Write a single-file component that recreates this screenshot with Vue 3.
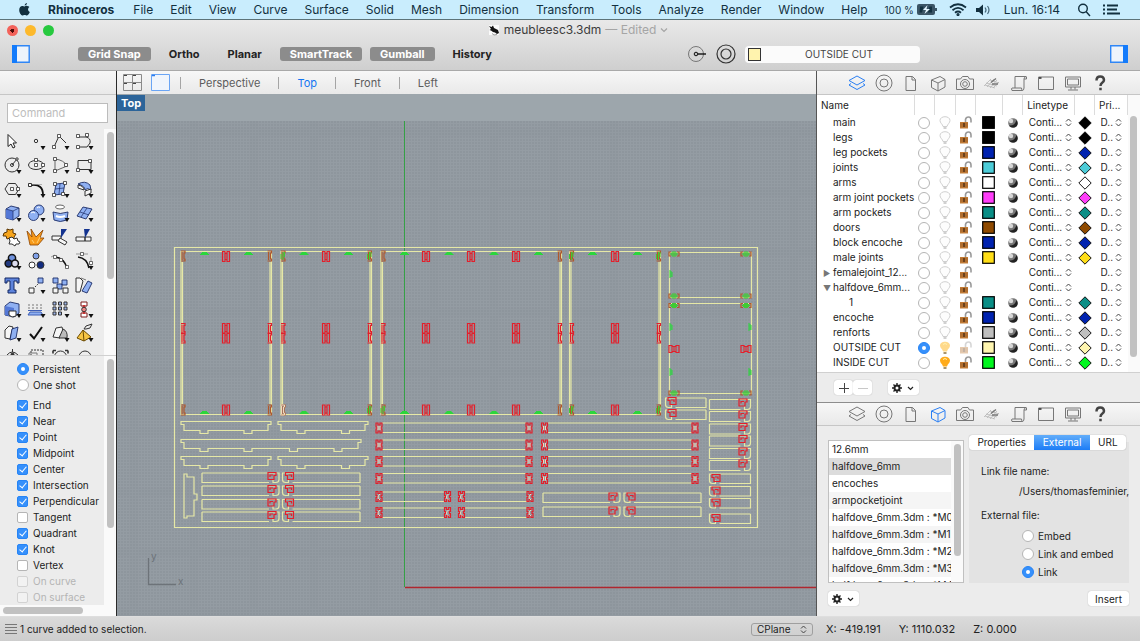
<template>
  <div class="app">
    <nav class="menubar">
      <svg class="menubar__apple" viewBox="0 0 14 16" width="13" height="15">
        <path
          fill="#12303f"
          d="M9.600 1c.1 1.300-1 2.700-2.400 2.800C7 2.500 8.300 1.100 9.600 1zM7 4.800c.6 0 1.500-.8 2.800-.7 1 .1 1.900.5 2.500 1.300-2.200 1.400-1.800 4.400.4 5.300-.6 1.700-1.800 3.700-3 3.700-1 0-1.300-.6-2.500-.6s-1.600.6-2.500.6C3.200 14.400 1.300 11.400 1.300 8.600c0-2.800 1.700-4.300 3.300-4.400 1.100 0 1.900.6 2.400.6z"
        />
      </svg>
      <a v-for="(item, i) in menu" :key="item" href="#" :class="{ strong: i === 0 }">{{ item }}</a>
      <div class="menubar__extras">
        <div class="battery">
          <span>100 %</span>
          <svg viewBox="0 0 20 11" width="20" height="11">
            <rect x="0" y="0" width="18" height="11" rx="2" fill="#3b5566" />
            <rect x="18" y="4" width="2" height="3" fill="#3b5566" />
            <path d="M3 2.500h3.500L5 8.500H2.500zM15 2.500h-2.500L11 8.500h4z" fill="#12303f" />
            <path d="M10.500 1L6 6h3l-1.500 4L13 5H9.500z" fill="#e4f6ff" />
          </svg>
        </div>
        <div class="signal">
          <svg viewBox="0 0 18 13" width="18" height="13" fill="none" stroke="#12303f" stroke-width="1.8">
            <path d="M1 4.500Q9-2 17 4.500M3.500 7.200Q9 2.500 14.500 7.200M6 9.700q3-2.400 6 0" />
            <circle cx="9" cy="11.500" r=".7" />
          </svg>
          <svg viewBox="0 0 17 12" width="17" height="12">
            <path d="M1 4h3l4-3.500v11L4 8H1z" fill="#12303f" />
            <path d="M10 3.500q2 2.500 0 5M12.500 2q3 4 0 8" fill="none" stroke="#46687a" stroke-width="1.2" />
          </svg>
        </div>
        <span class="clock">Lun. 16:14</span>
        <svg viewBox="0 0 14 14" width="14" height="14" fill="none" stroke="#12303f" stroke-width="1.4">
          <circle cx="6" cy="5.500" r="4.300" />
          <path d="M9 8.500l4 4.500" />
        </svg>
        <svg viewBox="0 0 17 11" width="17" height="11" stroke="#12303f" stroke-width="1.8">
          <path d="M0 1.500h2M4 1.500h11M0 5.500h2M4 5.500h10M0 9.500h2M4 9.500h13" />
        </svg>
      </div>
    </nav>

    <header class="titlebar">
      <div class="titlebar__row">
        <div class="lights">
          <button class="light light--close" aria-label="Close" />
          <button class="light light--min" aria-label="Minimise" />
          <button class="light light--zoom" aria-label="Zoom" />
        </div>
        <div class="title">
          <svg viewBox="0 0 12 12" width="12" height="12">
            <path d="M1 1h10v10H1z" fill="#fafafa" />
            <path d="M1 2l2.500 1L5 1.500 6 4l4 2 1 3-2 1-2-1.500L5 8 3 6.500 1.500 6 3 5z" fill="#111" />
            <path d="M4 9.500l2 1.500 3-.5" fill="none" stroke="#999" />
          </svg>
          <span>meubleesc3.3dm</span>
          <span class="title__state">— Edited</span>
          <svg viewBox="0 0 8 6" width="8" height="6" fill="none" stroke="#a5a5a5" stroke-width="1.2">
            <path d="M1 1.500l3 3 3-3" />
          </svg>
        </div>
      </div>

      <div class="toolbar">
        <button class="pane-toggle" aria-label="Toggle left sidebar">
          <svg viewBox="0 0 18 18" width="18" height="18">
            <path d="M.7.7h16.500v16.500H.7z" fill="#eef4fb" stroke="#2f86f6" stroke-width="1.4" />
            <path d="M0 0h5v18H0z" fill="#147bfb" />
          </svg>
        </button>
        <div class="toggles">
          <button v-for="t in toggles" :key="t.label" class="toggle" :class="{ 'toggle--on': t.on }">
            {{ t.label }}
          </button>
        </div>
        <div class="toolbar__layer">
          <svg viewBox="0 0 19 18" width="19" height="18" fill="none" stroke="#777">
            <circle cx="8" cy="9" r="7.500" />
            <circle cx="8" cy="9" r="1.800" stroke="#111" fill="#bbb" />
            <path d="M10 9h8" stroke="#111" stroke-width="1.4" />
          </svg>
          <svg viewBox="0 0 20 20" width="20" height="20" fill="none" stroke="#333" stroke-width="1.2">
            <circle cx="10" cy="10" r="9" />
            <circle cx="10" cy="10" r="5" />
          </svg>
          <button class="layer-button"><i />OUTSIDE CUT</button>
        </div>
        <button class="pane-toggle pane-toggle--right" aria-label="Toggle right sidebar">
          <svg viewBox="0 0 18 18" width="18" height="18">
            <path d="M.7.7h16.500v16.500H.7z" fill="#eef4fb" stroke="#2f86f6" stroke-width="1.4" />
            <path d="M13 0h5v18h-5z" fill="#147bfb" />
          </svg>
        </button>
      </div>
    </header>

    <main class="workspace">
      <aside class="left">
        <div class="strip" />
        <div class="command">
          <input type="text" placeholder="Command" aria-label="Command">
        </div>
        <div class="scroller scroller--tools">
          <div class="tools">
            <button v-for="(tool, i) in tools" :key="i" class="tool" :aria-label="`Tool ${i + 1}`">
              <svg viewBox="0 0 24 24" width="24" height="24" fill="none" stroke="#333" v-html="tool" />
            </button>
          </div>
          <div class="track"><div class="thumb thumb--tools" /></div>
        </div>
        <div class="scroller scroller--snaps">
          <div class="snaps">
            <div class="snaps__modes">
              <label v-for="m in ['Persistent', 'One shot']" :key="m" class="snap">
                <input v-model="snapMode" type="radio" name="mode" :value="m">{{ m }}
              </label>
            </div>
            <label v-for="s in snaps" :key="s.label" class="snap" :class="{ 'snap--off': s.disabled }">
              <input v-model="s.on" type="checkbox" :disabled="s.disabled">{{ s.label }}
            </label>
          </div>
          <div class="track"><div class="thumb thumb--snaps" /></div>
        </div>
        <div class="hscroll"><div /></div>
      </aside>

      <section class="viewport">
        <div class="tabs">
          <svg viewBox="0 0 19 17" width="19" height="17" fill="none" stroke="#8a8a8a">
            <path d="M.5.5h18v16H.5zM9.500.5v16M.5 8.500h18" />
            <path d="M1 1.500h3M10 1.500h3M1 9.500h3M10 9.500h3" stroke="#444" />
          </svg>
          <svg class="tabs__single" viewBox="0 0 19 17" width="19" height="17" fill="none" stroke="#6aa5f5">
            <path d="M.5.5h18v16H.5z" fill="#f0f5fc" />
            <path d="M1 1.500h3" stroke="#2b7df0" stroke-width="1.5" />
          </svg>
          <button v-for="v in views" :key="v" class="tab" :class="{ 'tab--on': v === view }" @click="view = v">
            {{ v }}
          </button>
        </div>
        <div class="canvas">
          <span class="canvas__label">Top</span>
          <svg class="canvas__svg" viewBox="117 94 699 522" preserveAspectRatio="xMinYMin slice" fill="none">
            <defs>
              <pattern id="fine" width="3" height="3" patternUnits="userSpaceOnUse">
                <path d="M0 .5h3M.5 0v3" stroke="#9ea6ad" stroke-width="1" />
              </pattern>
              <pattern id="coarse" width="60" height="60" patternUnits="userSpaceOnUse">
                <path d="M0 12h60M14 0v60" stroke="#868d94" stroke-width="9" opacity=".14" />
              </pattern>
            </defs>
            <rect x="117" y="94" width="699" height="27" fill="#9da6ac" />
            <rect x="117" y="121" width="699" height="495" fill="#8e969d" />
            <rect x="117" y="121" width="699" height="495" fill="url(#fine)" opacity=".4" />
            <rect x="117" y="121" width="699" height="495" fill="url(#coarse)" />
            <path d="M404.500 121v466" stroke="#35a045" />
            <path d="M405 587.500H816" stroke="#b0262e" stroke-width="1.4" />
            <path d="M148.500 558v26.500H176" stroke="#6d7379" stroke-width="1.3" />
            <text x="151" y="560" class="axis">y</text>
            <text x="178" y="585" class="axis">x</text>
            <path :d="outlines" stroke="#e6e8a6" stroke-width="1.2" />
            <path :d="greens" stroke="#2bd63c" />
            <path :d="corners" stroke="#b0582c" stroke-width="1.2" />
            <path :d="cornerFills" stroke="#3fcb33" />
            <path :d="reds" stroke="#e31f2b" stroke-width="1.2" />
            <path :d="cores" stroke="#f2d9bd" />
          </svg>
        </div>
      </section>

      <aside class="right">
        <div class="strip inspector">
          <button v-for="(icon, i) in inspectors" :key="i" :class="{ on: i === 0 }" :aria-label="icon.name">
            <svg viewBox="0 0 20 18" width="20" height="18" v-html="icon.art" />
          </button>
        </div>

        <div class="layers">
          <table>
            <colgroup>
              <col class="c-name">
              <col class="c-dot">
              <col class="c-bulb">
              <col class="c-dot">
              <col class="c-color">
              <col class="c-dot">
              <col class="c-line">
              <col class="c-dot">
              <col class="c-print">
            </colgroup>
            <thead>
              <tr>
                <th>Name</th><th /><th /><th /><th /><th /><th>Linetype</th><th /><th>Pri...</th>
              </tr>
            </thead>
            <tbody>
              <tr v-for="l in layers" :key="l.name">
                <td class="name" :class="{ 'name--child': l.child }">
                  <span class="name__arrow">{{ l.arrow }}</span>{{ l.name }}
                </td>
                <td>
                  <input v-model="current" type="radio" name="layer" :value="l.name" :aria-label="l.name">
                </td>
                <td>
                  <svg viewBox="0 0 12 14" width="12" height="14">
                    <path
                      d="M1 4.500C1 2 3.500.7 6 .7S11 2 11 4.500C11 7 8.500 8 8 10.500H4C3.500 8 1 7 1 4.500z"
                      :fill="l.bulb || '#fdfdfd'"
                      :stroke="l.bulb ? 'none' : '#c4c4c4'"
                      stroke-width=".8"
                    />
                    <path d="M4.500 11h3v2h-3z" :fill="l.bulb ? '#a8946a' : '#d0d0d0'" />
                    <path v-if="l.bulb" d="M4 3.500q2-2 4 0" fill="none" stroke="#fff3b0" />
                  </svg>
                </td>
                <td>
                  <svg viewBox="0 0 13 13" width="13" height="13" :opacity="l.name === 'OUTSIDE CUT' ? 0.4 : 1">
                    <path d="M6.500 6V3.500Q7 1 9.500 1T12 4v2.500" fill="none" stroke="#9a9a9a" stroke-width="1.6" />
                    <path d="M1 6h8v6.500H1z" fill="#c07a35" />
                    <path d="M1 8h8M1 10h8" stroke="#8f5520" stroke-width=".6" />
                    <path d="M5 7v4" stroke="#3c2410" stroke-width="1.2" />
                  </svg>
                </td>
                <td>
                  <svg v-if="l.color" viewBox="0 0 13 13" width="13" height="13">
                    <rect x=".7" y=".7" width="11.600" height="11.600" :fill="l.color" stroke="#000" stroke-width="1.2" />
                  </svg>
                </td>
                <td>
                  <svg v-if="l.color" viewBox="0 0 12 12" width="12" height="12">
                    <circle cx="6" cy="6" r="4.800" fill="#777" />
                    <path d="M2 8.500Q8 9 9.500 3q3 5-1.500 7.200Q4 11.500 2 8.500z" fill="#222" />
                    <circle cx="4" cy="4" r="2.200" fill="#d8d8d8" />
                  </svg>
                </td>
                <td>
                  <div class="popup popup--line">
                    <select :aria-label="`${l.name} linetype`"><option>Conti...</option></select>
                    <svg viewBox="0 0 7 9" width="7" height="9"><path d="M1 3.500l2.500-2.500L6 3.500M1 5.500L3.500 8 6 5.500" /></svg>
                  </div>
                </td>
                <td>
                  <svg v-if="l.color" viewBox="0 0 14 14" width="14" height="14">
                    <path d="M7 .8L13.200 7 7 13.200.8 7z" :fill="l.color" stroke="#111" />
                  </svg>
                </td>
                <td>
                  <div class="popup popup--print">
                    <select :aria-label="`${l.name} print width`"><option>D..</option></select>
                    <svg viewBox="0 0 7 9" width="7" height="9"><path d="M1 3.500l2.500-2.500L6 3.500M1 5.500L3.500 8 6 5.500" /></svg>
                  </div>
                </td>
              </tr>
            </tbody>
          </table>
          <div class="track"><div class="thumb thumb--layers" /></div>
        </div>

        <div class="layer-actions">
          <div class="pair">
            <button aria-label="Add layer">
              <svg viewBox="0 0 10 10" width="10" height="10" stroke="#444"><path d="M0 5.500h10M5.500 0v10" /></svg>
            </button>
            <button aria-label="Remove layer">
              <svg viewBox="0 0 10 10" width="10" height="10" stroke="#c8c8c8"><path d="M0 5.500h10" /></svg>
            </button>
          </div>
          <button class="gear" aria-label="Layer actions"><svg viewBox="0 0 24 10" width="24" height="10" v-html="gear" /></button>
        </div>

        <div class="strip inspector inspector--lower">
          <button v-for="(icon, i) in inspectors" :key="i" :class="{ on: i === 3 }" :aria-label="icon.name">
            <svg viewBox="0 0 20 18" width="20" height="18" v-html="icon.art" />
          </button>
        </div>

        <div class="blocks">
          <div class="blocks__main">
            <div class="list">
              <ul>
                <li v-for="b in blocks" :key="b" :class="{ selected: b === 'halfdove_6mm' }">{{ b }}</li>
              </ul>
              <div class="track"><div class="thumb thumb--list" /></div>
            </div>
            <div class="details">
              <div class="segments">
                <button v-for="s in ['Properties', 'External', 'URL']" :key="s" :class="{ on: s === 'External' }">
                  {{ s }}
                </button>
              </div>
              <div class="details__box">
                <p>Link file name:</p>
                <p class="path">/Users/thomasfeminier,</p>
                <p>External file:</p>
                <label v-for="e in ['Embed', 'Link and embed', 'Link']" :key="e">
                  <input v-model="external" type="radio" name="external" :value="e">{{ e }}
                </label>
              </div>
            </div>
          </div>
          <div class="blocks__actions">
            <button class="gear" aria-label="Block actions"><svg viewBox="0 0 24 10" width="24" height="10" v-html="gear" /></button>
            <button class="insert">Insert</button>
          </div>
        </div>
      </aside>
    </main>

    <footer class="status">
      <svg viewBox="0 0 12 10" width="12" height="10" stroke="#777"><path d="M0 .5h12M0 3.500h12M0 6.500h12M0 9.500h12" /></svg>
      <span class="status__text">1 curve added to selection.</span>
      <div class="cplane">
        <select aria-label="Coordinate system"><option>CPlane</option></select>
        <svg viewBox="0 0 7 9" width="7" height="9"><path d="M1 3.500l2.500-2.500L6 3.500M1 5.500L3.500 8 6 5.500" /></svg>
      </div>
      <div class="coords">
        <span>X: -419.191</span>
        <span>Y: 1110.032</span>
        <span>Z: 0.000</span>
      </div>
    </footer>
  </div>
</template>

<script setup>
import { ref, reactive } from 'vue';

const menu = [
  'Rhinoceros', 'File', 'Edit', 'View', 'Curve', 'Surface', 'Solid', 'Mesh', 'Dimension',
  'Transform', 'Tools', 'Analyze', 'Render', 'Window', 'Help',
];

const toggles = [
  { label: 'Grid Snap', on: true },
  { label: 'Ortho' },
  { label: 'Planar' },
  { label: 'SmartTrack', on: true },
  { label: 'Gumball', on: true },
  { label: 'History' },
];

const views = ['Perspective', 'Top', 'Front', 'Left'];
const view = ref('Top');

const snapMode = ref('Persistent');
const snaps = reactive([
  { label: 'End', on: true },
  { label: 'Near', on: true },
  { label: 'Point', on: true },
  { label: 'Midpoint', on: true },
  { label: 'Center', on: true },
  { label: 'Intersection', on: true },
  { label: 'Perpendicular', on: true },
  { label: 'Tangent', on: false },
  { label: 'Quadrant', on: true },
  { label: 'Knot', on: true },
  { label: 'Vertex', on: false },
  { label: 'On curve', on: false, disabled: true },
  { label: 'On surface', on: false, disabled: true },
]);

const current = ref('OUTSIDE CUT');
const layers = [
  { name: 'main', color: '#000000' },
  { name: 'legs', color: '#000000' },
  { name: 'leg pockets', color: '#0022b0' },
  { name: 'joints', color: '#4cccd8' },
  { name: 'arms', color: '#ffffff' },
  { name: 'arm joint pockets', color: '#ff3dfa' },
  { name: 'arm pockets', color: '#0a8e86' },
  { name: 'doors', color: '#8f4a00' },
  { name: 'block encoche', color: '#0022b0' },
  { name: 'male joints', color: '#ffde17' },
  { name: 'femalejoint_12...', arrow: '▶' },
  { name: 'halfdove_6mm...', arrow: '▼' },
  { name: '1', color: '#0a8e86', child: true },
  { name: 'encoche', color: '#0022b0' },
  { name: 'renforts', color: '#bfbfbf' },
  { name: 'OUTSIDE CUT', color: '#fff6b0', bulb: '#ffd98a' },
  { name: 'INSIDE CUT', color: '#00f71e', bulb: '#ffab1a' },
];

const blocks = [
  '12.6mm', 'halfdove_6mm', 'encoches', 'armpocketjoint',
  'halfdove_6mm.3dm : *M0', 'halfdove_6mm.3dm : *M1', 'halfdove_6mm.3dm : *M2',
  'halfdove_6mm.3dm : *M3', 'halfdove_6mm.3dm : *M4',
];
const external = ref('Link');

const gear =
  '<g stroke="#222"><circle cx="5" cy="5" r="2.500" fill="none" stroke-width="2"/>' +
  '<path d="M5 0v2M5 8v2M0 5h2M8 5h2M1.500 1.500l1.400 1.400M7 7l1.500 1.500M8.500 1.500L7 3M3 7L1.500 8.500" stroke-width="1.4"/>' +
  '<path d="M16 4l2.500 2.500L21 4" fill="none" stroke-width="1.2"/></g>';

const inspectors = [
  { name: 'Layers', art: '<path d="M10 2l8 4.500-8 4.500-8-4.500zM4 9.500L2 11l8 4.500 8-4.500-2-1.500"/>' },
  { name: 'Object', art: '<circle cx="10" cy="9" r="8"/><circle cx="10" cy="9" r="4"/>' },
  { name: 'Notes', art: '<path d="M5 2.500h6.500l3 3v11H5zM11 2.500v3.500h3.500"/>' },
  { name: 'Blocks', art: '<path d="M3.500 6L12 2.500l5 3V13l-7 4-6.500-3.500zM3.500 6l6.500 3 7-3.500M10 9v8"/>' },
  { name: 'Views', art: '<path d="M1.500 5h4l2-2.500h5.500L14.500 5h4v10.500h-17z"/><circle cx="10" cy="10" r="4.500"/><circle cx="10" cy="10" r="2.300"/>' },
  { name: 'Planes', art: '<path d="M2 12l7-7M5 13l7-8M8 14l7-8M11 14l6-6M4 9l11 3M3 11l10 3M8 6l9 3" stroke="#b5b5b5" stroke-width=".8"/><path d="M9 8.500l5-4M10 10h6" stroke="#777" stroke-width="1.4"/>' },
  { name: 'History', art: '<path d="M6 14V2.500h11q-2 .5-2 2.500v9q0 2.500-2 2.500H3q-1-2 0-2.500h9.500q0 2 1 2.500M15 5h2.500V2.500"/>' },
  { name: 'Frame', art: '<path d="M2.500 3h15v12.500h-15z"/><path d="M3 4h2.500" stroke="#333" stroke-width="1.6"/>' },
  { name: 'Display', art: '<path d="M2.500 3h15v10h-15zM4.500 5h11v6h-11zM8 13v2.500M12 13v2.500M5 16h10"/>' },
  { name: 'Help', art: '<path d="M6.500 6.500q0-4 3.700-4T14 6q0 1.500-1.800 2.700-1.700 1.200-1.700 3.300M10.500 13.700v2.500" stroke="#444" stroke-width="2.5"/>' },
];

// tool palette
const node = (x, y) => `M${x - 1.5} ${y - 1.5}h3v3h-3z`;
const more = '<path d="M16.500 17h5l-2.500 4z" fill="#111" stroke="none"/>';
const b = 'fill="#8fb0f2" stroke="#1c2c66" stroke-width=".9"';
const w = 'fill="#f6f6f6" stroke="#333"';

const tools = [
  '<path d="M8 5.500v12l3-2.500 2 4 2-1-2-4h3.500z" fill="#fff" stroke="#222"/>',
  '<circle cx="12" cy="12" r="1.700"/>' + more,
  `<path d="M6 18L11 7l7 7"/><path d="${node(6, 18)}${node(11, 7)}" fill="#fff" stroke-width=".8"/>` + more,
  `<path d="M6 8h8q5 1 4 6l-3 4H6"/><path d="${node(6, 7)}${node(15, 6)}${node(6, 18)}" fill="#fff" stroke-width=".8"/>` + more,
  '<circle cx="12" cy="12" r="7"/><path d="M12 12l5-6"/><circle cx="12" cy="12" r="1.500"/><circle cx="17" cy="6" r="1.200" fill="#fff"/>' + more,
  `<ellipse cx="12" cy="12" rx="7.500" ry="4.500"/><path d="${node(12, 12)}${node(12, 7)}${node(19, 12)}" fill="#fff" stroke-width=".8"/>` + more,
  `<path d="M7 6q9 1 12 7L7 18z" stroke="#666"/><path d="${node(7, 6)}${node(7, 18)}${node(18, 12)}" fill="#fff" stroke-width=".8"/>` + more,
  `<path d="M6 7.500h13v9H6z"/><path d="${node(6, 17)}${node(18, 8)}" fill="#fff" stroke-width=".8"/>` + more,
  `<path d="M8.500 6.500h7l3.500 5.500-3.500 5.500h-7L5 12z"/><path d="${node(12, 12)}${node(18, 12)}" fill="#fff" stroke-width=".8"/>` + more,
  `<path d="M8 8q11-1 11 10" stroke-width="1.8" stroke="#111"/><path d="M6 7.500h12" stroke="#999" stroke-width=".7"/><path d="${node(6, 8)}" fill="#fff"/>` + more,
  `<path d="M8 7l9-1-2 11-9 1z" ${b}/><path d="M7 12l9-1M12 7l-1 10" stroke="#1c2c66" stroke-width=".7"/><path d="${node(7, 7)}${node(17, 6)}${node(6, 18)}${node(15, 17)}" fill="#fff" stroke-width=".8"/>` + more,
  `<path d="M6 7q7-4 12 1l1 5q-4-3-6 0 0-4-7-6z" ${b}/><path d="M6 8q6 1 6 5l-6-2zM13 14l6-2v4l-6 3z" ${w}/>` + more,
  `<path d="M6 8l5-3 8 2v8l-6 4-7-2z" ${b}/><path d="M6 8l7 2v9l-7-2z" fill="#5478d6" stroke="none"/><path d="M6 8l7 2 6-3M13 10v9" stroke="#1c2c66" stroke-width=".7"/>` + more,
  `<circle cx="15" cy="9" r="5" ${b}/><circle cx="9.500" cy="14.500" r="5" ${b}/><path d="M7 12q2-2 4 0M13 7q2-2 3-.5" stroke="#fff"/>` + more,
  `<ellipse cx="12" cy="6" rx="4.500" ry="2" fill="#fff" stroke="#666"/><path d="M5 11q7 3 15 0l-1 8q-7 3-13 0z" ${b}/><path d="M8 15q4 2 9 0" stroke="#fff" stroke-width="2"/>` + more,
  `<path d="M5 15l6-9 9 2-6 10z" ${b}/><path d="M8 11l9 3M15 7l-6 9" stroke="#1c2c66" stroke-width=".7"/>` + more,
  '<path d="M4 8l3-1 0-3 3 1 3-1 0 4 3 1-2 3 0 2-4-1-3 1-1-3-3 0z" fill="#f7a51c" stroke="#5b3500"/><path d="M9 13l3-1 2 2 3-1 1 3 2 1-1 2-3 0-1 2-3-2-3 0 1-3z" fill="#fff"/>',
  '<path d="M3 6l5 6-1-8 5 8 7-7-3 8 4 0-6 7H6z" fill="#f79a1b" stroke="#8a4300" stroke-width=".8"/><path d="M8 15l2 3M13 18l3-6" stroke="#ffd37a"/>',
  `<path d="M4 11h9v4H4z" ${w}/><path d="M12 13l7 4-2 3-7-4z" ${w}/><path d="M13 4h6l-6 9z" fill="#14338f" stroke="none"/>`,
  `<path d="M4 12h9v4H4zM13 12h6v4h-6z" ${w}/><path d="M12 4h6l-5 9z" fill="#14338f" stroke="none"/>`,
  '<circle cx="12" cy="9" r="3.600" fill="#6f91dc" stroke="#111" stroke-width="1.5"/><circle cx="8.500" cy="14.500" r="3.400" fill="#223a80" stroke="#111" stroke-width="1.5"/><circle cx="15" cy="14.500" r="3.400" fill="#dde" stroke="#111" stroke-width="1.5"/>' + more,
  '<circle cx="12" cy="7" r="3" fill="#7fa0e8"/><circle cx="8" cy="16" r="3" fill="#fff"/><circle cx="16.500" cy="16" r="3.500" fill="#122c80"/>',
  `<path d="M7 8q9 1 12 11" stroke-width="1.6" stroke="#111"/><path d="M3 8l4-2" stroke="#999"/><path d="${node(7, 8)}${node(13, 11)}${node(19, 18)}" fill="#fff" stroke-width=".7"/>`,
  `<path d="M6 8q9 1 11 11" stroke-width="1.6" stroke="#111"/><path d="M4 5h12M19 8v9" stroke="#999"/><path d="${node(10, 5)}${node(19, 14)}" fill="#fff" stroke-width=".7"/>` + more,
  '<path d="M5 5h14v5h-2V8h-3v9h2v3H8v-3h2V8H7v2H5z" fill="#5d83dc" stroke="#142863"/>',
  `<path d="M5 15h5v5H5z" ${w}/><path d="M14 5h5v5h-5z" ${b}/><path d="M11 14l3-3" stroke-dasharray="1.5 1"/>` + more,
  `<path d="M5 5h5v5H5zM14 7h5v5h-5zM9 11h5v5H9z" ${b}/><path d="M5 15h5v5H5zM15 15h5v5h-5z" ${w}/>`,
  `<path d="M4 5h4l3 3-3 11H4z" ${w}/><path d="M16 8l4 2-5 10-5-2z" ${b}/><path d="M9 5l5 2" stroke="#777"/>`,
  `<path d="M5 9l5-4 9 2v9l-5 4-9-2z" ${b}/><path d="M5 9l9 2v9l-9-2z" fill="#5478d6" stroke="none"/><path d="M9 14h7v5l-4 1-3-2z" fill="#fff"/>` + more,
  '<path d="M4 18h15l-2-3H6z" fill="#8fb0f2" stroke="#3b5cb5"/><path d="M5 12V7M9 12V7M13 12V7M17 12V7" stroke="#777" stroke-dasharray="2 1"/><path d="M4 13.500h14" stroke="#3b5cb5"/>' + more,
  '<path d="M5 5h3v3H5zM10.500 5h3v3h-3zM16 5h3v3h-3zM5 10h3v3H5zM10.500 10h3v3h-3zM16 10h3v3h-3zM5 15h3v3H5zM10.500 15h3v3h-3z" fill="#9cb4ea"/>' + more,
  '<path d="M9 5h6v4H9zM9 16h6v4H9z" fill="#fff" stroke="#7d1d1d"/><path d="M12 8v9" stroke="#c33" stroke-width="2.5"/><circle cx="12" cy="12.500" r="2.300" fill="#e88"/>' + more,
  `<path d="M5 9l4-4 4 1-3 12-5-1z" ${w}/><path d="M12 8l6-2-2 11-6 2z" ${b}/>` + more,
  '<path d="M6 13l4 4.500L18 6" stroke="#111" stroke-width="2"/>' + more,
  `<path d="M5 16l3-9 6-1 1 4-3 7z" ${w}/><path d="M11 17l4-9q5 2 4 9z" fill="#bbb"/>` + more,
  '<path d="M5 17l6-8 8 7-7 4z" fill="#f6c544" stroke="#6b4a00"/><path d="M11 9l1 11" stroke="#6b4a00"/><path d="M12 8l2-3 6-2-2 4-4 1z" fill="#eee"/>' + more,
  '<path d="M7 10q5-6 11 0"/><circle cx="12.500" cy="9.500" r="1.500" fill="#333"/><path d="M12.500 4v3"/>',
  '<path d="M7 11V5h12v6" stroke-dasharray="2 1"/><path d="M5 8h8v6H5z" stroke="#777"/>',
  '<path d="M5 5.500h3M5 5.500v3M20 5.500h-3M20 5.500v3" stroke-width="1.6"/><circle cx="12.500" cy="12" r="6"/>',
  '<circle cx="13" cy="12" r="6"/>',
];

// cutting sheet, in drawing units
const box = (x1, y1, x2, y2) => `M${x1} ${y1}H${x2}V${y2}H${x1}z`;

const panels = [
  { x1: 181, x2: 271.5, joints: [226], marks: [204, 248], green: [] },
  { x1: 281, x2: 371.5, joints: [326], marks: [303.5, 348], green: ['0-256', '1-256', '1-410'] },
  { x1: 381, x2: 561.5, joints: [426, 471, 516], marks: [404, 448.5, 493.5, 538], green: ['0-410'] },
  { x1: 569.5, x2: 660.5, joints: [615], marks: [592, 637], green: ['0-256', '1-256', '0-410', '1-410'] },
];

// rail with a lip on both ends and small feet along the bottom
const rail = (x1, x2, y, feet) => {
  let d = `M${x1} ${y}H${x2}v3h-3v6h-1`;
  [...feet].reverse().forEach((f) => {
    d += `H${f + 4}v3H${f - 4}v-3`;
  });
  return `${d}H${x1 + 3}v-6h-3z`;
};

const slat = (x1, x2, y, h, side) => (side === 'r'
  ? `M${x1} ${y}H${x2}v${h - 3}q0 3-3 3h-3v-3M${x1} ${y}v${h}H${x2 - 10}`
  : `M${x2} ${y}H${x1}v${h - 3}q0 3 3 3h3v-3M${x2} ${y}v${h}H${x1 + 10}`);

const hook = (x, y, s) => `M${x - 4 * s} ${y - 3.5}H${x + 4 * s}v3h${-2 * s}v4h${-6 * s}zM${x - 2 * s} ${y + 1}v-2h${3 * s}`;
const joint = (x, y) => `M${x - 3.5} ${y - 5}h2.500v2h2v-2h2.500v10h-2.500v-2h-2v2h-2.500zM${x - 1} ${y - 3}v6M${x + 1} ${y - 3}v6`;
const lying = (x, y) => `M${x - 5} ${y - 3.5}v7h3v-1h4v1h3v-7h-3v1h-4v-1zM${x - 3} ${y - 1}h6M${x - 3} ${y + 1}h6`;
const half = (x, y) => `M${x - 2} ${y - 5}h4v2h-1v6h1v2h-4M${x - 1} ${y - 4}v8`;
const clip = (x, y) => `M${x - 3} ${y - 5}h2v2h2v-2h2v4h-1v2h1v4h-2v-2h-2v2h-2v-4h1v-2h-1z`;

let outlines = box(174.5, 247.5, 757.5, 527.5);
let reds = '';
let greens = '';
let corners = '';
let cornerFills = '';
let cores = '';

panels.forEach((p) => {
  outlines += box(p.x1, 251.5, p.x2, 414.5);
  outlines += `M${p.x1 + 1.5} 262V404M${p.x2 - 1.5} 262V404`;
  p.joints.forEach((x) => {
    reds += joint(x, 256.5) + joint(x, 328.5) + joint(x, 338) + joint(x, 410);
  });
  [p.x1 + 2, p.x2 - 2].forEach((x, side) => {
    reds += half(x, 328.5) + half(x, 338);
    [256, 410].forEach((y) => {
      corners += half(x, y);
      if (p.green.includes(`${side}-${y}`)) {
        cornerFills += `M${x} ${y - 4}v8M${x - 2} ${y - 2}v5M${x + 1.5} ${y - 4}v5`;
      }
    });
  });
  p.marks.forEach((x) => {
    greens += `M${x - 4} 254.500h9M${x - 2} 252.500h5M${x - 3} 253.500h7`;
    greens += `M${x - 4} 413.500h9M${x - 2} 411.500h5M${x - 3} 412.500h7`;
  });
});
cores += half(282.5, 410);

outlines += box(669.5, 252.5, 751.5, 297.5) + box(669.5, 303.5, 751.5, 393.5);
[254, 296, 305.5, 393].forEach((y) => {
  [674, 746].forEach((x) => {
    corners += `M${x - 3} ${y - 2}h-2v4h2M${x + 3} ${y - 2}h2v4h-2`;
    cornerFills += `M${x - 4} ${y}h8M${x - 3} ${y - 1}h6M${x - 2} ${y - 2}h4M${x - 2} ${y + 2}h4M${x - 3} ${y + 1}h6`;
  });
});
[[671, 274], [671, 327], [671, 372], [750, 327], [750, 372]].forEach(([x, y]) => {
  greens += `M${x - 1} ${y - 4}v8M${x} ${y - 3}v6M${x + 1} ${y - 2}v5`;
});
reds += lying(674, 349) + lying(746, 349);

[421.5, 456.5].forEach((y) => {
  outlines += rail(181, 271, y, [204, 248]) + rail(278, 368, y, [301, 345.5]);
});
outlines += rail(181, 361, 439.5, [204, 248, 293.5, 338]);
outlines += 'M184 474h3v3h7v17h3v6h-3v16h-7v2h-3z';

[473, 486, 499.5, 512].forEach((y) => {
  outlines += slat(202, 279, y, 9.5, 'r') + slat(282.5, 360, y, 9.5, 'l');
  reds += hook(272, y + 3, 1) + hook(289.5, y + 3, -1);
});

[423, 440, 456.5, 473.5].forEach((y) => {
  outlines += `M382 ${y}H526M382 ${y + 9.5}H526M548 ${y}H692M548 ${y + 9.5}H692`;
  [379, 529, 544.5, 695].forEach((x) => {
    reds += clip(x, y + 5);
    cores += `M${x - 1} ${y + 3}v4M${x + 1} ${y + 3}v4`;
  });
});

[492, 508].forEach((y) => {
  outlines += `M382 ${y}H445M382 ${y + 9.5}H445M465 ${y}H527M465 ${y + 9.5}H527`;
  [379, 447.5, 461.5, 530].forEach((x) => {
    reds += clip(x, y + 4.5);
    cores += `M${x + 1} ${y + 2}q-4 3 0 6`;
  });
});

[493, 507].forEach((y) => {
  outlines += slat(543, 620, y, 9.5, 'r') + slat(624, 701, y, 9.5, 'l');
  reds += hook(613, y + 3.5, 1) + hook(631, y + 3.5, -1);
});

[398, 410].forEach((y) => {
  outlines += slat(665.5, 706, y, 9.5, 'l');
  reds += hook(672, y + 3, -1);
});
[399.5, 411.5, 424, 436, 448.5, 460.5].forEach((y) => {
  outlines += slat(709.5, 750.5, y, 10, 'r');
  reds += hook(743, y + 3, 1);
});
[474, 486.5, 498.5, 514].forEach((y) => {
  outlines += slat(709.5, 750.5, y, 9.5, 'l');
  reds += hook(716, y + 4, -1);
});
</script>

<style>
body {
  margin: 0;
}
</style>

<style scoped>
.app {
  display: flex;
  flex-direction: column;
  min-height: 100vh;
  overflow: hidden;
  background: #ececec;
  color: #222;
  font: 10px/16px Inter, "Liberation Sans", sans-serif;
}

.app * {
  box-sizing: border-box;
}

button,
input,
select {
  margin: 0;
  padding: 0;
  border: 0;
  background: none;
  color: inherit;
  font: inherit;
}

svg {
  display: block;
  flex: none;
}

.menubar {
  display: flex;
  align-items: center;
  gap: 17px;
  height: 20px;
  padding: 0 20px 0 18px;
  border-bottom: 1px solid #5c7378;
  background: #c9edfd;
  color: #12303f;
  font-size: 12px;
  white-space: nowrap;
}

.menubar a {
  color: inherit;
  text-decoration: none;
}

.menubar .strong {
  margin-right: 2px;
  font-weight: 700;
}

.menubar__extras {
  display: flex;
  align-items: center;
  gap: 12px;
  margin-left: auto;
}

.battery {
  display: flex;
  align-items: center;
  gap: 3px;
  font-size: 10px;
}

.signal {
  display: flex;
  align-items: center;
  gap: 8px;
}

.clock {
  margin-right: 5px;
}

.titlebar {
  height: 51px;
  border-bottom: 1px solid #a9a9a9;
  background: linear-gradient(#e9e9e9, #cfcfcf);
}

.titlebar__row {
  display: grid;
  grid-template-columns: 1fr auto 1fr;
  align-items: center;
  height: 20px;
  padding: 0 7px;
}

.lights {
  display: flex;
  gap: 7px;
}

.light {
  width: 11px;
  height: 11px;
  border-radius: 50%;
}

.light--close {
  background: radial-gradient(#4a0b08 0 2px, #f3625a 2px);
}

.light--min {
  background: #fdb92c;
}

.light--zoom {
  background: #27c93f;
}

.title {
  display: flex;
  align-items: center;
  gap: 4px;
  margin-left: 16px;
  color: #3c3c3c;
  font-size: 12px;
}

.title__state {
  color: #a5a5a5;
}

.toolbar {
  display: flex;
  align-items: center;
  height: 28px;
  padding: 0 12px;
}

.toggles {
  display: flex;
  align-items: center;
  gap: 8px;
  margin-left: 48px;
}

.toggle {
  height: 14px;
  padding: 0 10px;
  border-radius: 3px;
  font-size: 11px;
  font-weight: 700;
  line-height: 14px;
}

.toggle--on {
  background: #8c8c8c;
  color: #fff;
}

.toolbar__layer {
  display: flex;
  align-items: center;
  gap: 9px;
  margin-left: auto;
}

.layer-button {
  display: flex;
  align-items: center;
  width: 175px;
  height: 17px;
  padding: 0 3px;
  border-radius: 4px;
  background: #fbfbfb;
  color: #444;
}

.layer-button i {
  width: 13px;
  height: 13px;
  margin-right: 44px;
  border: 1px solid #333;
  background: #fff3ae;
}

.pane-toggle--right {
  margin-left: 190px;
}

.workspace {
  display: flex;
  flex: 1;
  min-height: 0;
}

.strip {
  height: 24px;
  border-bottom: 1px solid #c6c6c6;
  background: linear-gradient(#f7f7f7, #e9e9e9);
}

.left {
  display: flex;
  flex: none;
  flex-direction: column;
  width: 117px;
  border-right: 1px solid #2a2a2a;
}

.command {
  padding: 8px 8px 6px 7px;
}

.command input {
  display: block;
  width: 100%;
  height: 20px;
  padding: 0 4px;
  border: 1px solid #bcbcbc;
  background: #fff;
  font-size: 11px;
}

.command input::placeholder {
  color: #bdbdbd;
}

.scroller {
  display: flex;
}

.scroller--tools {
  height: 226px;
  overflow: hidden;
}

.scroller--snaps {
  flex: 1;
  border-top: 1px solid #d0d0d0;
}

.tools {
  display: grid;
  flex: 1;
  grid-template-columns: repeat(4, 24px);
  grid-auto-rows: 24px;
}

.track {
  flex: none;
  width: 12px;
  padding: 3px;
  background: #fafafa;
}

.thumb {
  width: 7px;
  border-radius: 4px;
  background: #c1c1c1;
}

.thumb--tools {
  height: 147px;
}

.thumb--snaps {
  height: 169px;
}

.snaps {
  flex: 1;
  padding: 5px 0 0 17px;
}

.snaps__modes {
  margin-bottom: 4px;
}

.snap {
  display: flex;
  align-items: center;
  gap: 4px;
  height: 16px;
  white-space: nowrap;
}

.snap--off {
  color: #b4b4b4;
}

input[type='radio'],
input[type='checkbox'] {
  display: grid;
  flex: none;
  place-items: center;
  width: 12px;
  height: 12px;
  border: 1px solid #b5b5b5;
  background: #fff;
  appearance: none;
}

input[type='checkbox'] {
  width: 11px;
  height: 11px;
  margin-right: 1px;
  border-radius: 2px;
}

input[type='radio'] {
  border-radius: 50%;
}

input[type='radio']:checked,
input[type='checkbox']:checked {
  border-color: #2684f5;
  background: #3690fb;
}

input[type='radio']:checked::after {
  content: '';
  width: 4px;
  height: 4px;
  border-radius: 50%;
  background: #fff;
}

input[type='checkbox']:checked::after {
  content: '';
  width: 3px;
  height: 6px;
  margin-bottom: 2px;
  border: solid #fff;
  border-width: 0 1px 1px 0;
  transform: rotate(40deg);
}

input[type='checkbox']:disabled {
  border-color: #d2d2d2;
  background: #f2f2f2;
}

.hscroll {
  height: 11px;
  padding: 2px 3px;
  background: #fafafa;
}

.hscroll div {
  width: 80px;
  height: 7px;
  border-radius: 4px;
  background: #c1c1c1;
}

.viewport {
  display: flex;
  flex: 1;
  flex-direction: column;
  min-width: 0;
}

.tabs {
  display: flex;
  align-items: center;
  height: 23px;
  padding-left: 6px;
  background: linear-gradient(#f7f7f7, #e9e9e9);
  color: #5c5c5c;
  font-size: 11px;
}

.tabs__single {
  margin: 0 10px 0 9px;
}

.tab {
  height: 12px;
  padding: 0 18px;
  border-left: 1px solid #a5a5a5;
  line-height: 12px;
}

.tab--on {
  color: #1476f2;
}

.canvas {
  position: relative;
  flex: 1;
  background: #8e969d;
}

.canvas__svg {
  position: absolute;
  width: 100%;
  height: 100%;
}

.canvas__label {
  position: absolute;
  z-index: 1;
  top: 1px;
  left: 0;
  padding: 0 4px;
  background: #2c6499;
  color: #fff;
  font-size: 11px;
  font-weight: 700;
}

.axis {
  fill: #6d7379;
  font-size: 10px;
}

.right {
  display: flex;
  flex: none;
  flex-direction: column;
  width: 324px;
  border-left: 1px solid #555;
}

.inspector {
  display: flex;
  align-items: center;
  justify-content: center;
  gap: 7px;
}

.inspector--lower {
  border-top: 1px solid #8d8d8d;
}

.inspector svg {
  fill: none;
  stroke: #777;
}

.inspector .on svg {
  stroke: #2a7ff3;
}

.layers {
  display: flex;
  height: 278px;
  overflow: hidden;
  border-bottom: 1px solid #d0d0d0;
  background: #fff;
}

.layers .track {
  padding: 21px 2px 0;
}

.thumb--layers {
  height: 241px;
}

table {
  flex: 1;
  align-self: flex-start;
  border-collapse: collapse;
  table-layout: fixed;
}

.c-name {
  width: 97px;
}

.c-dot {
  width: 20px;
}

.c-bulb {
  width: 21px;
}

.c-color {
  width: 28px;
}

.c-line {
  width: 52px;
}

.c-print {
  width: 33px;
}

th {
  height: 20px;
  padding: 0 0 0 4px;
  border-right: 1px solid #dcdcdc;
  font-weight: 400;
  line-height: 18px;
  text-align: left;
}

td {
  height: 15px;
  padding: 0;
  line-height: 15px;
  white-space: nowrap;
}

td > svg,
td > input {
  margin: 0 auto;
}

.name__arrow {
  display: inline-block;
  width: 16px;
  padding-left: 6px;
  color: #777;
  font-size: 8px;
  line-height: 8px;
}

.name--child {
  padding-left: 16px;
}

.popup,
.cplane {
  display: flex;
  align-items: center;
}

.popup {
  padding-left: 6px;
}

.popup svg,
.cplane svg {
  fill: none;
  stroke: #444;
}

.popup select,
.cplane select {
  flex: 1;
  min-width: 0;
  height: 15px;
  appearance: none;
}

.popup--line {
  width: 49px;
}

.popup--print {
  width: 27px;
}

.layer-actions {
  display: flex;
  align-items: center;
  gap: 16px;
  height: 29px;
  padding-left: 17px;
}

.pair {
  display: flex;
}

.pair button,
.gear,
.insert {
  display: grid;
  place-items: center;
  height: 15px;
  border-radius: 3px;
  background: #fff;
  box-shadow: 0 0 1px #999;
}

.pair button {
  width: 19px;
}

.gear {
  width: 31px;
}

.blocks {
  display: flex;
  flex: 1;
  flex-direction: column;
  padding: 9px 11px 0;
}

.blocks__main {
  display: flex;
  gap: 5px;
}

.list {
  display: flex;
  width: 136px;
  height: 143px;
  margin-top: 5px;
  overflow: hidden;
  border: 1px solid #c0c0c0;
  background: #fff;
}

.list ul {
  flex: 1;
  margin: 0;
  padding: 0;
  overflow: hidden;
  list-style: none;
  white-space: nowrap;
}

.list li {
  height: 17px;
  padding-left: 3px;
  line-height: 17px;
}

.list li:nth-child(even) {
  background: #f5f5f5;
}

.list li.selected {
  background: #dcdcdc;
}

.thumb--list {
  height: 112px;
}

.details {
  display: flex;
  flex: 1;
  flex-direction: column;
  min-width: 0;
}

.segments {
  position: relative;
  z-index: 1;
  display: flex;
  margin: 0 3px -8px 0;
  border-radius: 3px;
  background: #fff;
  box-shadow: 0 0 1px #888;
}

.segments button {
  flex: 1 0 auto;
  height: 15px;
  line-height: 15px;
}

.segments .on {
  background: linear-gradient(#62adfa, #1c7cf6);
  color: #fff;
}

.details__box {
  flex: 1;
  padding: 21px 0 0 12px;
  background: #e3e3e3;
}

.details__box p {
  margin: 0 0 4px;
  white-space: nowrap;
}

.details__box .path {
  margin: 0 0 8px 38px;
}

.details__box label {
  display: flex;
  align-items: center;
  gap: 4px;
  height: 18px;
  padding-left: 41px;
  white-space: nowrap;
}

.blocks__actions {
  display: flex;
  justify-content: space-between;
  margin-top: 8px;
}

.insert {
  width: 41px;
}

.status {
  display: flex;
  align-items: center;
  height: 25px;
  padding-left: 5px;
  border-top: 1px solid #dedede;
  background: linear-gradient(#dadada, #cdcdcd);
}

.status__text {
  margin-left: 3px;
}

.cplane {
  width: 62px;
  height: 13px;
  margin-left: auto;
  padding: 0 5px;
  border: 1px solid #9f9f9f;
  border-radius: 3px;
}

.cplane select {
  height: 11px;
  line-height: 11px;
}

.coords {
  display: flex;
  gap: 18px;
  width: 314px;
  margin-left: 13px;
  font-size: 11px;
}
</style>
